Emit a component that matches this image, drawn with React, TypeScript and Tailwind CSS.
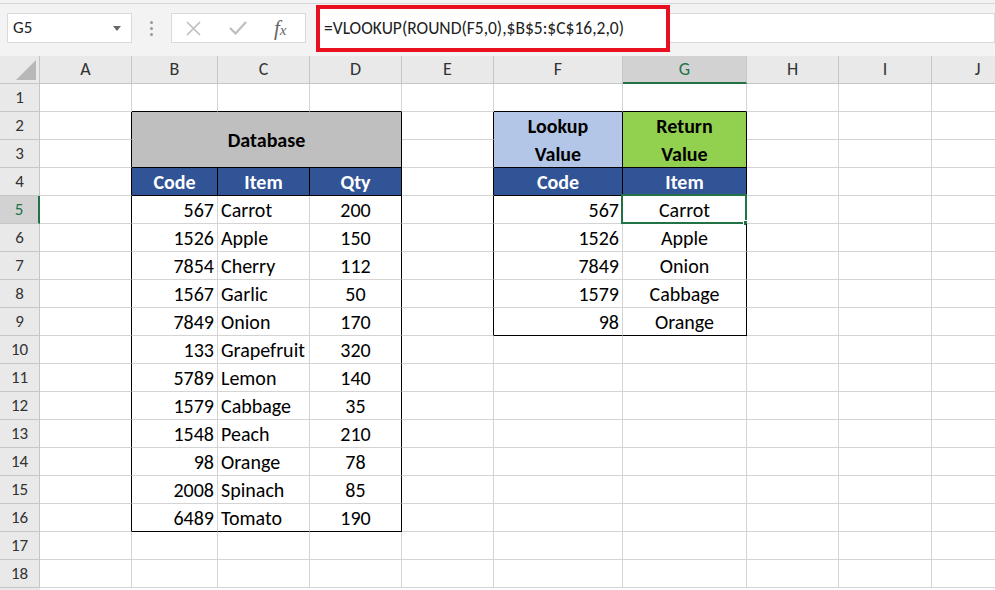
import React from "react";

const FONT = "font-['Carlito','Calibri','Lato','Open_Sans',sans-serif]";

const COLS = ["A", "B", "C", "D", "E", "F", "G", "H", "I", "J", "K"];

const db: [string, string, string][] = [
  ["567", "Carrot", "200"],
  ["1526", "Apple", "150"],
  ["7854", "Cherry", "112"],
  ["1567", "Garlic", "50"],
  ["7849", "Onion", "170"],
  ["133", "Grapefruit", "320"],
  ["5789", "Lemon", "140"],
  ["1579", "Cabbage", "35"],
  ["1548", "Peach", "210"],
  ["98", "Orange", "78"],
  ["2008", "Spinach", "85"],
  ["6489", "Tomato", "190"],
];

const lookup: [string, string][] = [
  ["567", "Carrot"],
  ["1526", "Apple"],
  ["7849", "Onion"],
  ["1579", "Cabbage"],
  ["98", "Orange"],
];

// which cells carry a black right / bottom border
function blackRight(r: number, c: number) {
  if (r >= 2 && r <= 16 && (c === 0 || c === 3)) return true;
  if (r === 4 && (c === 1 || c === 2)) return true;
  if (r >= 2 && r <= 9 && (c === 4 || c === 6)) return true;
  if (r >= 2 && r <= 4 && c === 5) return true;
  return false;
}

function blackBottom(r: number, c: number) {
  if (c >= 1 && c <= 3 && [1, 3, 4, 16].includes(r)) return true;
  if (c >= 5 && c <= 6 && [1, 3, 4, 9].includes(r)) return true;
  return false;
}

function Cell({
  r,
  c,
  children,
  className = "",
}: {
  r: number;
  c: number;
  children?: React.ReactNode;
  className?: string;
}) {
  const br = blackRight(r, c) ? "border-r-black" : "border-r-[#d4d4d4]";
  const bb = blackBottom(r, c) ? "border-b-black" : "border-b-[#d4d4d4]";
  return (
    <div className={`relative border-r border-b ${br} ${bb} flex items-center text-[20px] text-black overflow-visible whitespace-nowrap ${className}`}>
      {children}
    </div>
  );
}

function RowHead({ n, active }: { n: number; active?: boolean }) {
  return (
    <div
      className={`flex items-center justify-center text-[17px] border-b border-b-[#c6c6c6] ${
        active
          ? "bg-[#d2d2d2] text-[#217346] border-r-2 border-r-[#217346]"
          : "bg-[#e9e9e9] text-[#333] border-r border-r-[#c6c6c6]"
      }`}
    >
      {n}
    </div>
  );
}

function Toolbar() {
  return (
    <div className="h-[56px] bg-[#f3f3f3] relative">
      <div className="h-[4px] border-b border-[#d6d6d6]" />
      <div className="flex items-start">
        {/* name box */}
        <div className="ml-[7px] mt-[9px] w-[125px] h-[30px] bg-white border border-[#dadada] flex items-center justify-between pl-[5px] pr-[10px]">
          <span className="text-[17px] text-[#222]">G5</span>
          <svg width="8" height="5" viewBox="0 0 8 5">
            <path d="M0 0h8L4 5z" fill="#666" />
          </svg>
        </div>
        <div className="w-[39px] h-[30px] mt-[9px] flex flex-col items-center justify-center gap-[3px]">
          <span className="w-[3px] h-[3px] rounded-full bg-[#9a9a9a]" />
          <span className="w-[3px] h-[3px] rounded-full bg-[#9a9a9a]" />
          <span className="w-[3px] h-[3px] rounded-full bg-[#9a9a9a]" />
        </div>
        {/* cancel / enter / fx */}
        <div className="mt-[9px] w-[135px] h-[30px] bg-white border border-[#dadada] flex items-center">
          <svg className="ml-[14px]" width="15" height="15" viewBox="0 0 15 15">
            <path d="M1 1L14 14M14 1L1 14" stroke="#bdbdbd" strokeWidth="1.6" />
          </svg>
          <svg className="ml-[28px]" width="18" height="14" viewBox="0 0 18 14">
            <path d="M1 7L6.5 12.5L17 1" stroke="#bdbdbd" strokeWidth="2.2" fill="none" />
          </svg>
          <span className="ml-[27px] font-['Liberation_Serif',serif] italic text-[21px] text-[#666] leading-none">
            f<span className="text-[15px]">x</span>
          </span>
        </div>
        {/* formula box */}
        <div className="ml-[10px] mt-[1px] w-[354px] h-[47px] border-[4px] border-[#e8101f] bg-white flex items-center pl-[4px]">
          <span className="text-[17.5px] text-[#222]">=VLOOKUP(ROUND(F5,0),$B$5:$C$16,2,0)</span>
        </div>
        <div className="flex-1 mt-[9px] h-[30px] bg-white border border-[#dadada] border-l-0" />
      </div>
    </div>
  );
}

export default function App() {
  const rows: React.ReactNode[] = [];

  // column header row
  rows.push(
    <div key="corner" className="bg-[#e9e9e9] border-r border-b border-[#c6c6c6] relative">
      <svg className="absolute right-[3px] bottom-[3px]" width="20" height="20" viewBox="0 0 20 20">
        <path d="M20 0V20H0z" fill="#b8b8b8" />
      </svg>
    </div>
  );
  COLS.forEach((c) =>
    rows.push(
      <div
        key={"h" + c}
        className={`flex items-center justify-center text-[18px] border-r border-r-[#c6c6c6] ${
          c === "G"
            ? "bg-[#d2d2d2] text-[#217346] border-b-2 border-b-[#217346]"
            : "bg-[#e9e9e9] text-[#333] border-b border-b-[#c6c6c6]"
        }`}
      >
        {c === "K" ? "" : c}
      </div>
    )
  );

  for (let r = 1; r <= 18; r++) {
    rows.push(<RowHead key={"r" + r} n={r} active={r === 5} />);
    for (let c = 0; c < COLS.length; c++) {
      const key = r + "-" + c;
      // merged cells occupy these slots
      if (r === 3 && (c === 1 || c === 2 || c === 3 || c === 5 || c === 6)) continue;
      if (r === 2 && (c === 2 || c === 3)) continue;

      if (r === 2 && c === 1) {
        rows.push(
          <Cell key={key} r={3} c={3} className="col-span-3 row-span-2 bg-[#bfbfbf] justify-center font-bold">
            Database
          </Cell>
        );
        continue;
      }
      if (r === 2 && c === 5) {
        rows.push(
          <Cell key={key} r={3} c={5} className="row-span-2 bg-[#b4c6e7] justify-center font-bold text-center leading-[28px] whitespace-normal">
            Lookup
            <br />
            Value
          </Cell>
        );
        continue;
      }
      if (r === 2 && c === 6) {
        rows.push(
          <Cell key={key} r={3} c={6} className="row-span-2 bg-[#92d050] justify-center font-bold text-center leading-[28px] whitespace-normal">
            Return
            <br />
            Value
          </Cell>
        );
        continue;
      }
      if (r === 4 && c >= 1 && c <= 3) {
        rows.push(
          <Cell key={key} r={r} c={c} className="bg-[#305496] text-white font-bold justify-center">
            {["Code", "Item", "Qty"][c - 1]}
          </Cell>
        );
        continue;
      }
      if (r === 4 && (c === 5 || c === 6)) {
        rows.push(
          <Cell key={key} r={r} c={c} className="bg-[#305496] text-white font-bold justify-center">
            {c === 5 ? "Code" : "Item"}
          </Cell>
        );
        continue;
      }
      if (r >= 5 && r <= 16 && c >= 1 && c <= 3) {
        const d = db[r - 5];
        const cls = c === 1 ? "justify-end pr-[3px]" : c === 2 ? "justify-start pl-[3px]" : "justify-center";
        rows.push(
          <Cell key={key} r={r} c={c} className={cls}>
            {d[c - 1]}
          </Cell>
        );
        continue;
      }
      if (r >= 5 && r <= 9 && (c === 5 || c === 6)) {
        const d = lookup[r - 5];
        rows.push(
          <Cell key={key} r={r} c={c} className={c === 5 ? "justify-end pr-[3px]" : "justify-center"}>
            {c === 5 ? d[0] : d[1]}
            {r === 5 && c === 6 && (
              <div className="absolute left-[-2px] top-[-2px] right-[-1px] bottom-[-1px] border-2 border-[#217346] pointer-events-none">
                <div className="absolute right-[-4px] bottom-[-4px] w-[6px] h-[6px] bg-[#217346] border border-white" />
              </div>
            )}
          </Cell>
        );
        continue;
      }
      rows.push(<Cell key={key} r={r} c={c} className="bg-white" />);
    }
  }

  return (
    <div className={`w-[995px] h-[590px] overflow-hidden bg-white ${FONT}`}>
      <Toolbar />
      <div className="grid grid-cols-[40px_92px_86px_92px_92px_92px_129px_124px_92px_93px_92px_92px] auto-rows-[28px] w-[1116px]">
        {rows}
      </div>
      <div className="h-[2px] bg-[#e9e9e9] w-[40px]" />
    </div>
  );
}
